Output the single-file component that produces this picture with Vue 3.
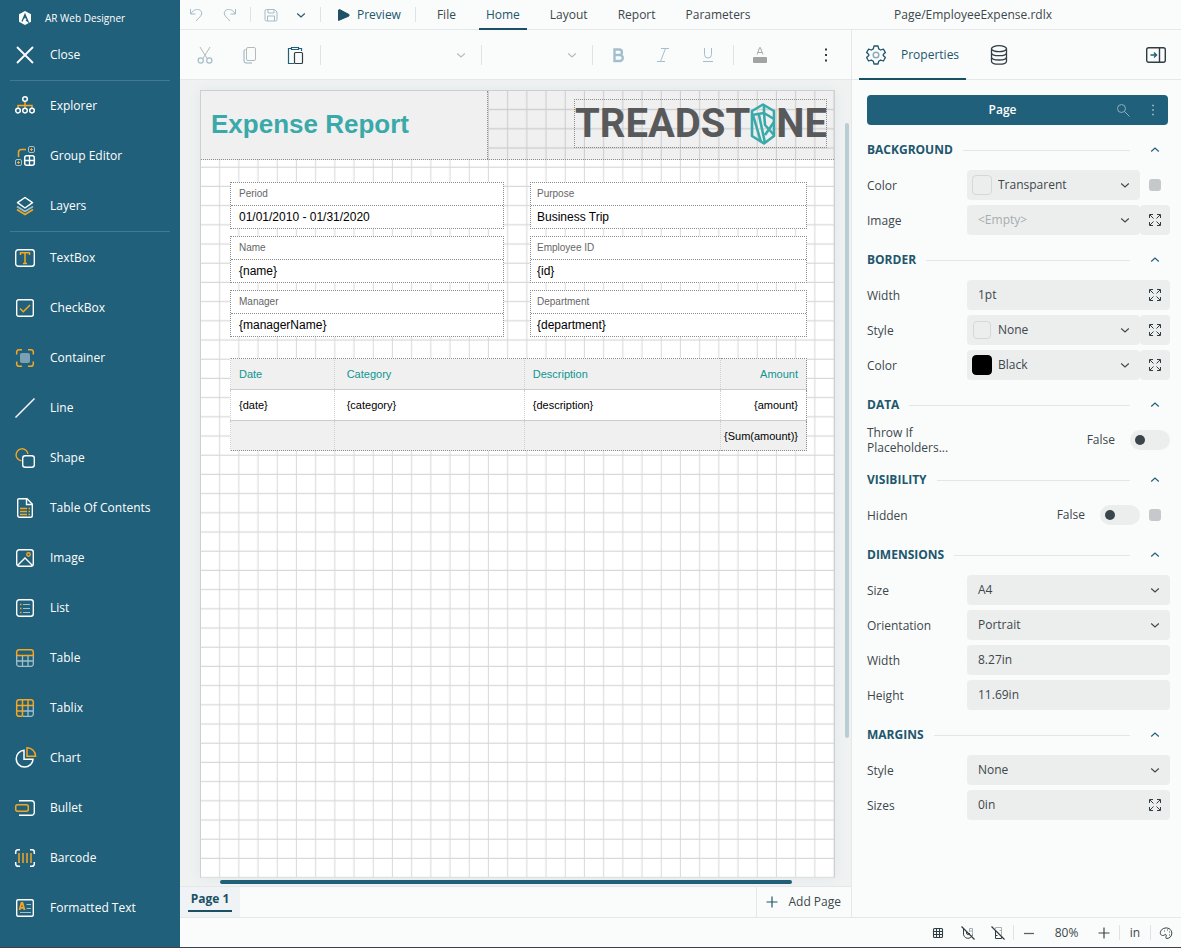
<script setup>
import { ref } from 'vue'

const W = 'stroke="#fff" fill="none"'
const O = 'stroke="#f5a623" fill="none"'
const M = 'stroke="#a3bfcb" fill="none"'

const icons = {
  close: `<path d="M2 2L18 18M18 2L2 18" stroke-width="1.8" ${W}/>`,
  explorer: `<path d="M10 5v8M3 12V9.5h14V12" stroke-width="1.5" ${O}/><g stroke-width="1.5" ${W}><circle cx="10" cy="3" r="2.3"/><circle cx="3" cy="14.6" r="2.3"/><circle cx="10" cy="14.6" r="2.3"/><circle cx="17" cy="14.6" r="2.3"/></g>`,
  group: `<path d="M3.5 11V6.5a3 3 0 0 1 3-3H11" stroke-width="1.5" ${O}/><g ${M}><rect x="13.5" y=".5" width="6" height="6" rx="1.5"/><rect x=".5" y="13.5" width="6" height="6" rx="1.5"/></g><path d="M16.5 2v3M15 3.500h3M3.500 15v3M2 16.500h3" ${O}/><rect x="9.7" y="9.7" width="9.600" height="9.600" rx="2" stroke-width="1.500" ${W}/><path d="M14.500 10v9M10 14.500h9" stroke-width="1.300" ${W}/>`,
  layers: `<path d="M2 13.500l8 5 8-5" stroke-width="1.600" ${O}/><path d="M2 10.500l8 5 8-5" stroke-width="1.500" ${M}/><path d="M10 1.500l7.500 5.200L10 12 2.500 6.700z" stroke-width="1.500" stroke-linejoin="round" ${W}/>`,
  textbox: `<rect x=".7" y="1.700" width="18.600" height="16.600" rx="2.500" stroke-width="1.400" ${W}/><path d="M5.500 7V4.700h9V7M10 4.700v10.600M8 15.400h4" stroke-width="1.500" ${O}/>`,
  checkbox: `<rect x="1.700" y="1.700" width="16.600" height="16.600" rx="2" stroke-width="1.400" ${W}/><path d="M5 10.500l3.300 3.300L15 7" stroke-width="1.500" ${O}/>`,
  container: `<rect x="5" y="5" width="10" height="10" rx="2" fill="#7ba0b1"/><path d="M1.700 6.500V4a2.300 2.300 0 0 1 2.300-2.300h3M13 1.700h3A2.300 2.300 0 0 1 18.300 4v2.500M18.300 13.500V16a2.300 2.300 0 0 1-2.300 2.300h-3M7 18.300H4A2.300 2.300 0 0 1 1.700 16v-2.500" stroke-width="1.500" ${O}/>`,
  line: `<path d="M.5 19.500l19-19" stroke-width="1.400" ${W}/>`,
  shape: `<path d="M6.500 12.800A6 6 0 1 1 13 6" stroke-width="1.400" ${O}/><rect x="7.700" y="7.700" width="11.600" height="11.600" rx="2.500" stroke-width="1.400" ${W}/>`,
  toc: `<path d="M4 .7h8l5.300 5.300v11.500a1.800 1.800 0 0 1-1.800 1.800H4.500a1.800 1.800 0 0 1-1.800-1.800V2A1.300 1.300 0 0 1 4 .7zM11.500 1v5.500H17" stroke-width="1.400" ${W}/><path d="M5 10.500h7M5 13.500h7M5 16.500h7M13.500 10.500H15M13.500 13.500H15M13.500 16.500H15" stroke-width="1.300" ${O}/>`,
  image: `<rect x="1.700" y="1.700" width="16.600" height="16.600" rx="2.500" stroke-width="1.400" ${W}/><path d="M2.500 17.500L10 10l7.500 7.500" stroke-width="1.400" ${W}/><circle cx="13.500" cy="6.500" r="1.700" stroke-width="1.500" ${O}/>`,
  list: `<rect x="1.700" y="1.700" width="16.600" height="16.600" rx="2.500" stroke-width="1.400" ${W}/><path d="M8 6.500h7M8 10.500h7M8 14.500h7" ${M}/><path d="M5 6.500h1.500M5 10.500h1.500M5 14.500h1.500" stroke-width="1.500" ${O}/>`,
  table: `<path d="M1.700 8v8A2.300 2.300 0 0 0 4 18.300h12a2.300 2.300 0 0 0 2.300-2.300V8M7.500 8v10M13 8v10M2 13h16" stroke-width="1.300" ${M}/><path d="M1.700 7.500V4A2.300 2.300 0 0 1 4 1.700h12A2.300 2.300 0 0 1 18.300 4v3.500z" stroke-width="1.500" ${O}/>`,
  tablix: `<path d="M8 18.300h8a2.300 2.300 0 0 0 2.300-2.300V8M13 8v10M8 13h10" stroke-width="1.300" ${M}/><path d="M7.500 18.300H4A2.300 2.300 0 0 1 1.700 16V4A2.300 2.300 0 0 1 4 1.700h12A2.300 2.300 0 0 1 18.300 4v3.500H2M7.500 2v16M13 2v5.500M2 13h5.500" stroke-width="1.500" ${O}/>`,
  chart: `<path d="M9 2.300a8.400 8.400 0 1 0 9 9H9z" stroke-width="1.500" ${W}/><path d="M12 8.300V-.3a8.600 8.600 0 0 1 8.600 8.600z" stroke-width="1.500" ${O}/>`,
  bullet: `<path d="M4 2.700h12.500a2.800 2.800 0 0 1 2.800 2.800v9a2.800 2.800 0 0 1-2.800 2.800H4" stroke-width="1.400" ${W}/><rect x=".7" y="6.700" width="12.600" height="6.600" rx="2" stroke-width="1.500" ${O}/>`,
  barcode: `<path d="M.7 6V4A2.300 2.300 0 0 1 3 1.700h2M15 1.700h2A2.300 2.300 0 0 1 19.300 4v2M19.300 14v2a2.300 2.300 0 0 1-2.300 2.300h-2M5 18.300H3A2.300 2.300 0 0 1 .7 16v-2" stroke-width="1.500" ${W}/><path d="M4 5v10M8 5v10M12 5v10M16 5v10" stroke-width="1.500" ${O}/>`,
  formatted: `<rect x="1.700" y="1.700" width="16.600" height="16.600" rx="1.500" stroke-width="1.400" ${W}/><path d="M11.500 6.500H16M11.500 10.500H16M5 14.500h11" ${M}/><path d="M4.500 12L6.500 5h1L9.500 12M5.300 9.800h3.400" stroke-width="1.800" ${O}/>`,
  undo: `<path d="M3.500 4v5h5M4 9c1.500-3.500 4-4.500 6.500-4.500 4 0 5.500 4 3 6.700L9 16" stroke="#a3bcc8" fill="none"/>`,
  redo: `<path d="M15.500 4v5h-5M15 9c-1.500-3.500-4-4.500-6.500-4.500-4 0-5.500 4-3 6.700L10 16" stroke="#a3bcc8" fill="none"/>`,
  save: `<path d="M5.500 4.500h8l2.500 2.500v7.500a1.500 1.500 0 0 1-1.500 1.500h-9A1.500 1.500 0 0 1 4 14.500V6a1.500 1.500 0 0 1 1.500-1.500zM7 4.500V8h6V5M6.500 16v-5h7v5" stroke="#a3bcc8" fill="none"/>`,
  play: `<path d="M5.500 5v10.500L16 11v-1.500L6.500 4.500z" fill="#1f5166" stroke="#1f5166"/>`,
  cut: `<path d="M5 2l7.200 11.700M15 2L7.800 13.700" stroke="#b4b9bb" fill="none"/><g stroke="#a3bcc8" fill="none" stroke-width="1.200"><circle cx="5.700" cy="15.500" r="2.600"/><circle cx="14.300" cy="15.500" r="2.600"/></g>`,
  copy: `<path d="M5.500 4.500a1.500 1.500 0 0 0-1.500 1.500v10a2 2 0 0 0 2 2h6" stroke="#8fb0c0" fill="none"/><rect x="6.500" y="2.500" width="9" height="13" rx="1.500" stroke="#b4b9bb" fill="none"/>`,
  paste: `<path d="M6 3.500H3.500v15H9M6.500 2.500h7v2h-7zM14 3.500h2.500V6" stroke="#21607a" fill="none" stroke-width="1.200"/><rect x="9.500" y="7.500" width="8" height="11" rx="1" stroke="#303d42" fill="none" stroke-width="1.200"/>`,
  bold: `<path d="M6.500 4.500h4.700a2.700 2.700 0 0 1 0 5.500H6.500zM6.500 10h5.300a3 3 0 0 1 0 6H6.500z" stroke="#a3bfcd" stroke-width="2.400" fill="none"/>`,
  italic: `<path d="M8 3.500h8M4 16.500h8M12.500 3.500l-5 13" stroke="#a3bfcd" fill="none"/>`,
  underline: `<path d="M6.500 3v6.500a3.500 3.500 0 0 0 7 0V3M5 16.500h10" stroke="#a3bfcd" fill="none"/>`,
  colorA: `<path d="M7 9.500L9.700 2.500h.6L13 9.500M8 7.500h4" stroke="#a5a8a9" fill="none"/><rect x="3" y="12" width="14" height="6" rx="1" fill="#a2a4a4"/>`,
  dots: `<path d="M9 4.500h2M9 10h2M9 15.500h2" stroke="currentColor" stroke-width="2" fill="none"/>`,
  smallDots: `<path d="M9 5.500h2M9 10h2M9 14.500h2" stroke="currentColor" stroke-width="1.500" fill="none"/>`,
  gear: `<path d="M8 1h4l.7 2.900 1.900 1.100 2.800-.9 2 3.500-2.200 2v.9l2.200 2-2 3.500-2.800-.9-1.900 1.100L12 19H8l-.7-2.800-1.900-1.100-2.800.9-2-3.500 2.200-2v-.9l-2.200-2 2-3.500 2.800.9 1.900-1.100z" stroke="#21566c" stroke-width="1.300" stroke-linejoin="round" fill="none"/><circle cx="10" cy="10" r="2.800" stroke="#8fabb8" stroke-width="1.500" fill="none"/>`,
  db: `<g stroke="#303d42" stroke-width="1.300" fill="none"><ellipse cx="10" cy="3.700" rx="7.500" ry="3"/><path d="M2.500 3.700v12.500c0 4 15 4 15 0V3.700M2.500 7.700c0 4 15 4 15 0M2.500 12c0 4 15 4 15 0"/></g>`,
  collapse: `<rect x=".7" y="2.700" width="18.600" height="14.600" rx="2" stroke="#303d42" stroke-width="1.400" fill="none"/><path d="M13.500 3v14" stroke="#303d42" stroke-width="1.400"/><path d="M4.500 10H10M8 7.500l2.500 2.500L8 12.500" stroke="#21607a" stroke-width="1.400" fill="none"/>`,
  search: `<g stroke="#8fb0bf" fill="none"><circle cx="8.500" cy="8.500" r="4"/><path d="M11.500 11.500l5 5"/></g>`,
  down: `<path d="M6.200 8.500l3.800 3.500 3.800-3.500" stroke="currentColor" stroke-width="1.100" fill="none"/>`,
  up: `<path d="M6.200 11.500L10 8l3.800 3.500" stroke="currentColor" stroke-width="1.200" fill="none"/>`,
  expand: `<path d="M4.500 8V4.500H8M5 5l3.500 3.500M12 4.500h3.500V8M15 5l-3.500 3.500M15.500 12v3.500H12M15 15l-3.500-3.500M8 15.500H4.500V12M5 15l3.500-3.500" stroke="#303d42" fill="none"/>`,
  grid: `<path d="M6.500 5.500h7a1 1 0 0 1 1 1v7a1 1 0 0 1-1 1h-7a1 1 0 0 1-1-1v-7a1 1 0 0 1 1-1zM8.500 5.500v9M11.500 5.500v9M5.500 8.500h9M5.500 11.500h9" stroke="#303d42" fill="none" stroke-width="1.100"/>`,
  magnet: `<path d="M5.500 5v5a4.500 4.500 0 0 0 9 1.500M8.500 8v2a1.500 1.500 0 0 0 3 0" stroke="#303d42" fill="none"/><path d="M11.500 9V5.500h3V11M11.500 8h3" stroke="#a9b0b2" fill="none"/><path d="M3.500 3.500l13 13" stroke="#303d42" stroke-width="1.200"/>`,
  ruler: `<path d="M7.500 7.500v8h6v-1.500M7.500 12.500h2" stroke="#303d42" fill="none"/><path d="M7.500 6V4.500h6v8M11.500 7.500h2" stroke="#a9b0b2" fill="none"/><path d="M3.500 3.500l13 13" stroke="#303d42" stroke-width="1.200"/>`,
  minus: `<path d="M5 10.500h10" stroke="#596469" stroke-width="1.300"/>`,
  plus: `<path d="M10 4.500v11M4.500 10h11" stroke="currentColor" stroke-width="1.200"/>`,
  palette: `<path d="M6.500 12.500C3 12 4 7 7.500 5.500c4-1.700 8.300.6 8.300 4.700 0 3-2.300 5.300-5 5.300-1.300 0-1-1.500-.6-2.500.4-1.300-.7-2-1.500-1.200-.6.500-1.200.9-2.200.7z" stroke="#303d42" fill="none"/><path d="M8 8h.9M11 7h.9M13 9h.9M13 12h.9" stroke="#303d42" />`,
}

const mainTools = [
  { label: 'Explorer', icon: 'explorer' },
  { label: 'Group Editor', icon: 'group' },
  { label: 'Layers', icon: 'layers' },
]
const reportItems = [
  ['TextBox', 'textbox'], ['CheckBox', 'checkbox'], ['Container', 'container'], ['Line', 'line'],
  ['Shape', 'shape'], ['Table Of Contents', 'toc'], ['Image', 'image'], ['List', 'list'],
  ['Table', 'table'], ['Tablix', 'tablix'], ['Chart', 'chart'], ['Bullet', 'bullet'],
  ['Barcode', 'barcode'], ['Formatted Text', 'formatted'],
].map(([label, icon]) => ({ label, icon }))

const tabs = ['File', 'Home', 'Layout', 'Report', 'Parameters']
const activeTab = ref('Home')

const fields = [
  [['Period', '01/01/2010 - 01/31/2020'], ['Purpose', 'Business Trip']],
  [['Name', '{name}'], ['Employee ID', '{id}']],
  [['Manager', '{managerName}'], ['Department', '{department}']],
]

const sections = ref([
  { title: 'Background', rows: [
    { label: 'Color', type: 'select', value: 'Transparent', swatch: 'clear', side: 'mark' },
    { label: 'Image', type: 'select', value: '<Empty>', muted: true, side: 'expand' },
  ] },
  { title: 'Border', rows: [
    { label: 'Width', type: 'text', value: '1pt', side: 'inner' },
    { label: 'Style', type: 'select', value: 'None', swatch: 'clear', side: 'expand' },
    { label: 'Color', type: 'select', value: 'Black', swatch: 'black', side: 'expand' },
  ] },
  { title: 'Data', rows: [{ label: 'Throw If Placeholders...', type: 'toggle', value: false }] },
  { title: 'Visibility', rows: [{ label: 'Hidden', type: 'toggle', value: false, side: 'mark' }] },
  { title: 'Dimensions', rows: [
    { label: 'Size', type: 'select', value: 'A4' },
    { label: 'Orientation', type: 'select', value: 'Portrait' },
    { label: 'Width', type: 'text', value: '8.27in' },
    { label: 'Height', type: 'text', value: '11.69in' },
  ] },
  { title: 'Margins', rows: [
    { label: 'Style', type: 'select', value: 'None' },
    { label: 'Sizes', type: 'text', value: '0in', side: 'inner' },
  ] },
])
</script>

<template>
  <div class="app">
    <nav class="sidebar">
      <div class="brand">
        <svg width="14" height="14" viewBox="0 0 14 14"><path d="M7 0l6 3.300v7.400L7 14l-6-3.300V3.300z" fill="#fff" /><path d="M4 10.500L7 3.500l3 7-2-1.500M7 3.500v4" stroke="#21607a" stroke-width="1.300" fill="none" /></svg>
        <span>AR Web Designer</span>
      </div>
      <button class="side-item"><svg class="icon" viewBox="0 0 20 20" v-html="icons.close" />Close</button>
      <hr />
      <button v-for="t in mainTools" :key="t.label" class="side-item">
        <svg class="icon" viewBox="0 0 20 20" v-html="icons[t.icon]" />{{ t.label }}
      </button>
      <hr />
      <div class="report-items">
        <button v-for="t in reportItems" :key="t.label" class="side-item">
          <svg class="icon" viewBox="0 0 20 20" v-html="icons[t.icon]" />{{ t.label }}
        </button>
      </div>
    </nav>

    <div class="main">
      <header class="topbar">
        <button class="tool narrow" aria-label="Undo"><svg class="icon" viewBox="0 0 20 20" v-html="icons.undo" /></button>
        <button class="tool narrow" aria-label="Redo"><svg class="icon" viewBox="0 0 20 20" v-html="icons.redo" /></button>
        <i class="sep" />
        <button class="tool save" aria-label="Save"><svg class="icon" viewBox="0 0 20 20" v-html="icons.save" /></button>
        <button class="tool more" aria-label="Save options"><svg class="icon" viewBox="0 0 20 20" v-html="icons.down" /></button>
        <i class="sep" />
        <button class="preview"><svg class="icon" viewBox="0 0 20 20" v-html="icons.play" />Preview</button>
        <i class="sep" />
        <div class="tabs">
          <button v-for="t in tabs" :key="t" class="tab" :class="{ active: t === activeTab }" @click="activeTab = t">{{ t }}</button>
        </div>
        <div class="filename">Page/EmployeeExpense.rdlx</div>
      </header>

      <div class="body">
        <main class="workspace">
          <div class="toolbar">
            <button class="tool" aria-label="Cut"><svg class="icon" viewBox="0 0 20 20" v-html="icons.cut" /></button>
            <button class="tool" aria-label="Copy"><svg class="icon" viewBox="0 0 20 20" v-html="icons.copy" /></button>
            <button class="tool" aria-label="Paste"><svg class="icon" viewBox="0 0 20 20" v-html="icons.paste" /></button>
            <i class="sep tall lead" />
            <div class="combo family"><select aria-label="Font family"><option></option></select><svg class="icon" viewBox="0 0 20 20" v-html="icons.down" /></div>
            <i class="sep tall flush" />
            <div class="combo size"><select aria-label="Font size"><option></option></select><svg class="icon" viewBox="0 0 20 20" v-html="icons.down" /></div>
            <i class="sep tall flush" />
            <button class="tool first" aria-label="Bold"><svg class="icon" viewBox="0 0 20 20" v-html="icons.bold" /></button>
            <button class="tool" aria-label="Italic"><svg class="icon" viewBox="0 0 20 20" v-html="icons.italic" /></button>
            <button class="tool" aria-label="Underline"><svg class="icon" viewBox="0 0 20 20" v-html="icons.underline" /></button>
            <i class="sep tall" />
            <button class="tool" aria-label="Text color"><svg class="icon" viewBox="0 0 20 20" v-html="icons.colorA" /></button>
            <button class="tool last" aria-label="More"><svg class="icon" viewBox="0 0 20 20" v-html="icons.dots" /></button>
          </div>

          <div class="canvas">
            <section class="page">
              <svg class="page-grid" aria-hidden="true">
                <defs>
                  <pattern id="grid" width="96" height="96" patternUnits="userSpaceOnUse" patternTransform="scale(.2)">
                    <path d="M93 0v96M0 93h96" stroke="#d8d8d8" stroke-width="5" />
                  </pattern>
                </defs>
                <rect width="100%" height="100%" fill="url(#grid)" />
              </svg>
              <div class="report-head">
                <h1>Expense Report</h1>
                <div class="logo-cell">
                  <div class="logo">
                    <span>TREADST</span>
                    <svg width="26" height="42" viewBox="0 0 26 42"><g fill="none" stroke="#3aa9a9" stroke-width="2.600" stroke-linejoin="round"><path d="M13 1.500L24 8v25l-10 7.500L2 33V8z" /><path d="M2 12l12-2 10 6M14 2v8M3 12l8 27M9 12l6 28M14 10l1 12 9 10M24 19l-9 13" /></g></svg>
                    <span>NE</span>
                  </div>
                </div>
              </div>
              <div class="fields">
                <template v-for="(pair, i) in fields" :key="i">
                  <dl v-for="f in pair" :key="f[0]" class="field"><dt>{{ f[0] }}</dt><dd>{{ f[1] }}</dd></dl>
                </template>
              </div>
              <table class="expenses">
                <colgroup><col class="c1" /><col class="c2" /><col class="c3" /><col class="c4" /></colgroup>
                <thead><tr><th>Date</th><th>Category</th><th>Description</th><th>Amount</th></tr></thead>
                <tbody><tr><td>{date}</td><td>{category}</td><td>{description}</td><td>{amount}</td></tr></tbody>
                <tfoot><tr><td></td><td></td><td></td><td>{Sum(amount)}</td></tr></tfoot>
              </table>
            </section>
            <div class="vtrack"><div class="vthumb" /></div>
            <div class="htrack"><div class="hthumb" /></div>
          </div>

          <div class="pages">
            <button class="page-tab"><span>Page 1</span></button>
            <button class="add-page"><svg class="icon" viewBox="0 0 20 20" v-html="icons.plus" />Add Page</button>
          </div>
        </main>

        <aside class="panel">
          <div class="panel-tabs">
            <button class="panel-tab active"><svg class="icon" viewBox="0 0 20 20" v-html="icons.gear" />Properties</button>
            <button class="panel-tab" aria-label="Data"><svg class="icon" viewBox="0 0 20 20" v-html="icons.db" /></button>
            <button class="panel-tab end" aria-label="Collapse panel"><svg class="icon" viewBox="0 0 20 20" v-html="icons.collapse" /></button>
          </div>
          <div class="panel-body">
            <div class="target">
              <span>Page</span>
              <button aria-label="Search"><svg class="icon" viewBox="0 0 20 20" v-html="icons.search" /></button>
              <button aria-label="Options"><svg class="icon" viewBox="0 0 20 20" v-html="icons.smallDots" /></button>
            </div>
            <section v-for="s in sections" :key="s.title" class="group">
              <div class="group-head">
                <h2>{{ s.title }}</h2><i />
                <button :aria-label="'Collapse ' + s.title"><svg class="icon" viewBox="0 0 20 20" v-html="icons.up" /></button>
              </div>
              <div v-for="r in s.rows" :key="r.label" class="row">
                <label :for="s.title + r.label">{{ r.label }}</label>
                <div class="control">
                  <div v-if="r.type === 'select'" class="box" :class="{ muted: r.muted, swatched: r.swatch }">
                    <i v-if="r.swatch" class="swatch" :class="[r.swatch, { small: r.value === 'None' }]" />
                    <select :id="s.title + r.label"><option>{{ r.value }}</option></select>
                    <svg class="icon" viewBox="0 0 20 20" v-html="icons.down" />
                  </div>
                  <div v-else-if="r.type === 'text'" class="box">
                    <input :id="s.title + r.label" v-model="r.value" type="text" />
                    <button v-if="r.side === 'inner'" class="inner" aria-label="Expand"><svg class="icon" viewBox="0 0 20 20" v-html="icons.expand" /></button>
                  </div>
                  <div v-else class="toggle">
                    <span>{{ r.value ? 'True' : 'False' }}</span>
                    <input :id="s.title + r.label" v-model="r.value" type="checkbox" role="switch" />
                  </div>
                  <button v-if="r.side === 'expand'" class="side expand" aria-label="Expand"><svg class="icon" viewBox="0 0 20 20" v-html="icons.expand" /></button>
                  <button v-if="r.side === 'mark'" class="side" aria-label="Property options"><i class="mark" /></button>
                </div>
              </div>
            </section>
          </div>
        </aside>
      </div>

      <footer class="status">
        <button aria-label="Grid"><svg class="icon" viewBox="0 0 20 20" v-html="icons.grid" /></button>
        <button aria-label="Snapping"><svg class="icon" viewBox="0 0 20 20" v-html="icons.magnet" /></button>
        <button aria-label="Rulers"><svg class="icon" viewBox="0 0 20 20" v-html="icons.ruler" /></button>
        <i class="sep flush" />
        <button aria-label="Zoom out"><svg class="icon" viewBox="0 0 20 20" v-html="icons.minus" /></button>
        <button class="zoom">80%</button>
        <button aria-label="Zoom in"><svg class="icon" viewBox="0 0 20 20" v-html="icons.plus" /></button>
        <i class="sep flush" />
        <button>in</button>
        <i class="sep flush" />
        <button aria-label="Theme"><svg class="icon" viewBox="0 0 20 20" v-html="icons.palette" /></button>
      </footer>
    </div>
  </div>
</template>

<style>
body { margin: 0; }
</style>

<style scoped>
.app, .app * { box-sizing: border-box; }
.app {
  display: flex;
  min-height: 100vh;
  border-bottom: 1px solid #40404a;
  background: #fafcfb;
  color: #3c474c;
  font: 12px/20px "Open Sans", "Noto Sans", sans-serif;
}
button, select, input { margin: 0; padding: 0; border: 0; background: none; color: inherit; font: inherit; }
button { cursor: pointer; }
.icon { width: 20px; height: 20px; flex: none; display: block; overflow: visible; }

.sidebar { width: 180px; flex: none; display: flex; flex-direction: column; background: #21607a; color: #fff; }
.brand { display: flex; align-items: center; gap: 13px; height: 30px; padding: 6px 0 0 18px; font-size: 10px; font-weight: 500; }
.side-item { display: flex; align-items: center; gap: 15px; width: 100%; height: 50px; padding: 0 15px; text-align: left; font-weight: 500; }
.sidebar hr { width: 160px; height: 1px; margin: 0 10px; border: 0; background: #427a91; }
.report-items { padding-top: 1px; }

.main { flex: 1; min-width: 0; display: flex; flex-direction: column; }
.topbar { display: flex; align-items: center; height: 30px; border-bottom: 1px solid #e5e8e8; }
.tool { display: flex; align-items: center; justify-content: center; width: 45px; height: 48px; }
.topbar .tool { height: 29px; }
.tool.narrow { width: 33px; }
.sep { width: 1px; height: 15px; flex: none; background: #dfe3e3; margin: 0 3px; }
.sep.tall { height: 20px; }
.sep.flush { margin: 0; }
.sep.lead { margin-right: 0; }
.topbar .sep { margin: 0 4px; }
.topbar .tool.save { width: 31px; }
.topbar .tool.more { width: 30px; color: #21566c; }
.preview { display: flex; align-items: center; gap: 4px; height: 29px; padding: 0 10px 0 8px; color: #21566c; }
.tabs { display: flex; gap: 16px; padding-left: 10px; align-self: stretch; }
.tab { height: 30px; padding: 2px 7px 0; border-bottom: 2px solid transparent; }
.tab.active { border-color: #1b5064; color: #21566c; }
.filename { width: 287px; margin-left: auto; padding-top: 1px; white-space: nowrap; }

.body { flex: 1; display: flex; min-height: 0; }
.workspace { flex: 1; min-width: 0; display: flex; flex-direction: column; }
.toolbar { display: flex; align-items: center; height: 50px; padding: 0 3px 0 2px; border-bottom: 1px solid #e5e8e8; }
.combo { position: relative; display: flex; align-items: center; height: 30px; color: #b4bbbd; }
.combo select { width: 100%; height: 30px; appearance: none; }
.combo .icon { position: absolute; right: 10px; pointer-events: none; }
.family { width: 160px; }
.size { width: 110px; }
.tool.first { margin-left: 2px; }
.tool.last { margin-left: auto; color: #303d42; }

.canvas { flex: 1; display: grid; grid-template-columns: minmax(0, 1fr) 16px; grid-template-rows: minmax(0, 1fr) 8px; padding: 10px 0 0 20px; background: #f0f2f2; overflow: hidden; }
.page { position: relative; border: 1px solid #cdd0d0; border-bottom-color: #e0e0e0; background: #fff; box-shadow: 0 0 12px rgba(33, 96, 122, .07); font-family: "Liberation Sans", Arial, sans-serif; color: #000; }
.page-grid { position: absolute; inset: 0; width: 100%; height: 100%; }
.report-head { position: relative; display: flex; height: 69px; border-bottom: 1px dotted #8c8c8c; background: rgba(0, 0, 0, .06); }
.report-head h1 { width: 287px; margin: 0; padding: 18px 0 0 10px; border-right: 1px dotted #8c8c8c; background: #f0f0f0; color: #3aa9a9; font-size: 26px; line-height: 30px; }
.logo-cell { flex: 1; display: flex; justify-content: flex-end; align-items: flex-start; padding: 8px 7px 0 0; }
.logo { display: flex; align-items: center; justify-content: space-between; width: 253px; height: 49px; border: 1px dotted #8c8c8c; color: #58595b; font: bold 40px/48px Roboto, "Liberation Sans", sans-serif; }
.logo svg { flex: none; }
.fields { position: relative; display: grid; grid-template-columns: 274fr 277fr; gap: 7px 26px; padding: 22px 27px 0 29px; }
.field { margin: 0; border: 1px dotted #8c8c8c; background: #fff; }
.field dt { padding: 0 8px; color: #666; font-size: 10px; line-height: 22px; }
.field dd { margin: 0; padding: 0 8px; border-top: 1px dotted #8c8c8c; font-size: 12px; line-height: 22px; }
.field:nth-child(even) dt, .field:nth-child(even) dd { padding-left: 6px; }

.expenses { position: relative; width: calc(100% - 56px); margin: 21px 27px 0 29px; border: 1px dotted #8c8c8c; border-collapse: collapse; table-layout: fixed; background: #fff; font-size: 11px; }
.c1 { width: 18%; }
.c2 { width: 33%; }
.c3 { width: 34%; }
.c4 { width: 15%; }
.expenses th, .expenses td { height: 31px; padding: 0 8px; border-left: 1px dotted #d0d0d0; text-align: left; font-weight: normal; white-space: nowrap; }
.expenses tfoot td { height: 30px; }
.expenses th:last-child, .expenses td:last-child { padding-left: 0; text-align: right; }
.expenses th { color: #0f9590; }
.expenses td:nth-child(2), .expenses th:nth-child(2) { padding-left: 12px; }
.expenses thead, .expenses tfoot { background: #f0f0f0; }
.expenses tbody tr { border-top: 1px solid #ccc; border-bottom: 1px solid #ccc; }
.vtrack { padding: 33px 2px 140px 10px; }
.vthumb { width: 4px; height: 100%; border-radius: 2px; background: #b9cdd4; }
.htrack { grid-column: 1 / 3; padding: 2px 59px 0 20px; }
.hthumb { height: 4px; border-radius: 2px; background: #21607a; }

.pages { display: flex; justify-content: space-between; height: 31px; border-top: 1px solid #e3e7e9; }
.page-tab { width: 60px; padding: 0 8px 5px; background: #eff3f6; color: #1b5064; font-weight: 700; }
.page-tab span { display: block; line-height: 23px; border-bottom: 2px solid #1b5064; }
.add-page { display: flex; align-items: center; gap: 6px; padding: 0 10px 0 5px; border-left: 1px solid #e3e7e9; }
.add-page .icon { color: #21566c; }

.panel { width: 330px; flex: none; border-left: 1px solid #e5e8e8; }
.panel-tabs { display: flex; height: 50px; padding: 0 10px 0 7px; border-bottom: 1px solid #e5e8e8; }
.panel-tab { display: flex; align-items: center; gap: 15px; height: 50px; padding: 2px 7px 0; border-bottom: 2px solid transparent; }
.panel-tab.active { margin-right: 16px; border-color: #1b5064; color: #21566c; }
.panel-tab.end { margin-left: auto; padding: 2px 5px 0; }
.panel-body { padding: 15px 11px 15px 15px; }
.target { display: flex; align-items: center; height: 30px; margin-right: 2px; border-radius: 4px; background: #21607a; color: #fff; }
.target span { flex: 1; padding-left: 30px; text-align: center; font-weight: 600; }
.target button { width: 30px; display: flex; justify-content: center; color: #8fb0bf; }
.group { display: flex; flex-direction: column; gap: 5px; margin-top: 10px; }
.group-head { display: flex; align-items: center; height: 30px; gap: 10px; }
.group-head h2 { margin: 0; color: #21566c; font-size: 12px; font-weight: 700; line-height: 20px; text-transform: uppercase; }
.group-head i { flex: 1; height: 1px; background: #e0e6e9; }
.group-head button { width: 30px; display: flex; justify-content: center; color: #21607a; }
.row { display: flex; align-items: center; min-height: 30px; }
.row label { width: 100px; flex: none; padding-right: 15px; line-height: 15px; }
.control { flex: 1; min-width: 0; display: flex; height: 30px; }
.box { position: relative; flex: 1; min-width: 0; display: flex; align-items: center; border-radius: 4px; background: #eceeed; }
.box select, .box input { flex: 1; min-width: 0; width: 100%; height: 30px; padding: 0 30px 1px 11px; appearance: none; }
.box input + .inner { margin-left: -30px; }
.box select + .icon { position: absolute; right: 5px; pointer-events: none; }
.muted select { color: #a7adaf; }
.box.swatched select { padding-left: 6px; }
.swatch { width: 20px; height: 20px; flex: none; margin-left: 5px; border: 1px solid #d4d8d8; border-radius: 4px; }
.swatch.small { width: 18px; height: 18px; margin: 0 1px 0 6px; }
.swatch.black { border-color: #000; background: #000; }
.inner { width: 30px; display: flex; justify-content: center; }
.side { width: 30px; display: flex; align-items: center; justify-content: center; }
.side.expand { border-radius: 4px; background: #eceeed; }
.mark { width: 12px; height: 12px; border-radius: 3px; background: #c5c9cc; }
.toggle { flex: 1; display: flex; align-items: center; justify-content: flex-end; gap: 15px; }
.toggle input { width: 40px; height: 20px; appearance: none; border-radius: 10px; background: #eceeed; display: flex; align-items: center; padding: 0 5px; }
.toggle input::before { content: ""; width: 10px; height: 10px; border-radius: 50%; background: #3a464b; }
.toggle input:checked { justify-content: flex-end; }

.status { display: flex; align-items: center; justify-content: flex-end; height: 30px; border-top: 1px solid #e5e8e8; }
.status button { width: 30px; display: flex; align-items: center; justify-content: center; }
.status .zoom { width: 45px; }
</style>
